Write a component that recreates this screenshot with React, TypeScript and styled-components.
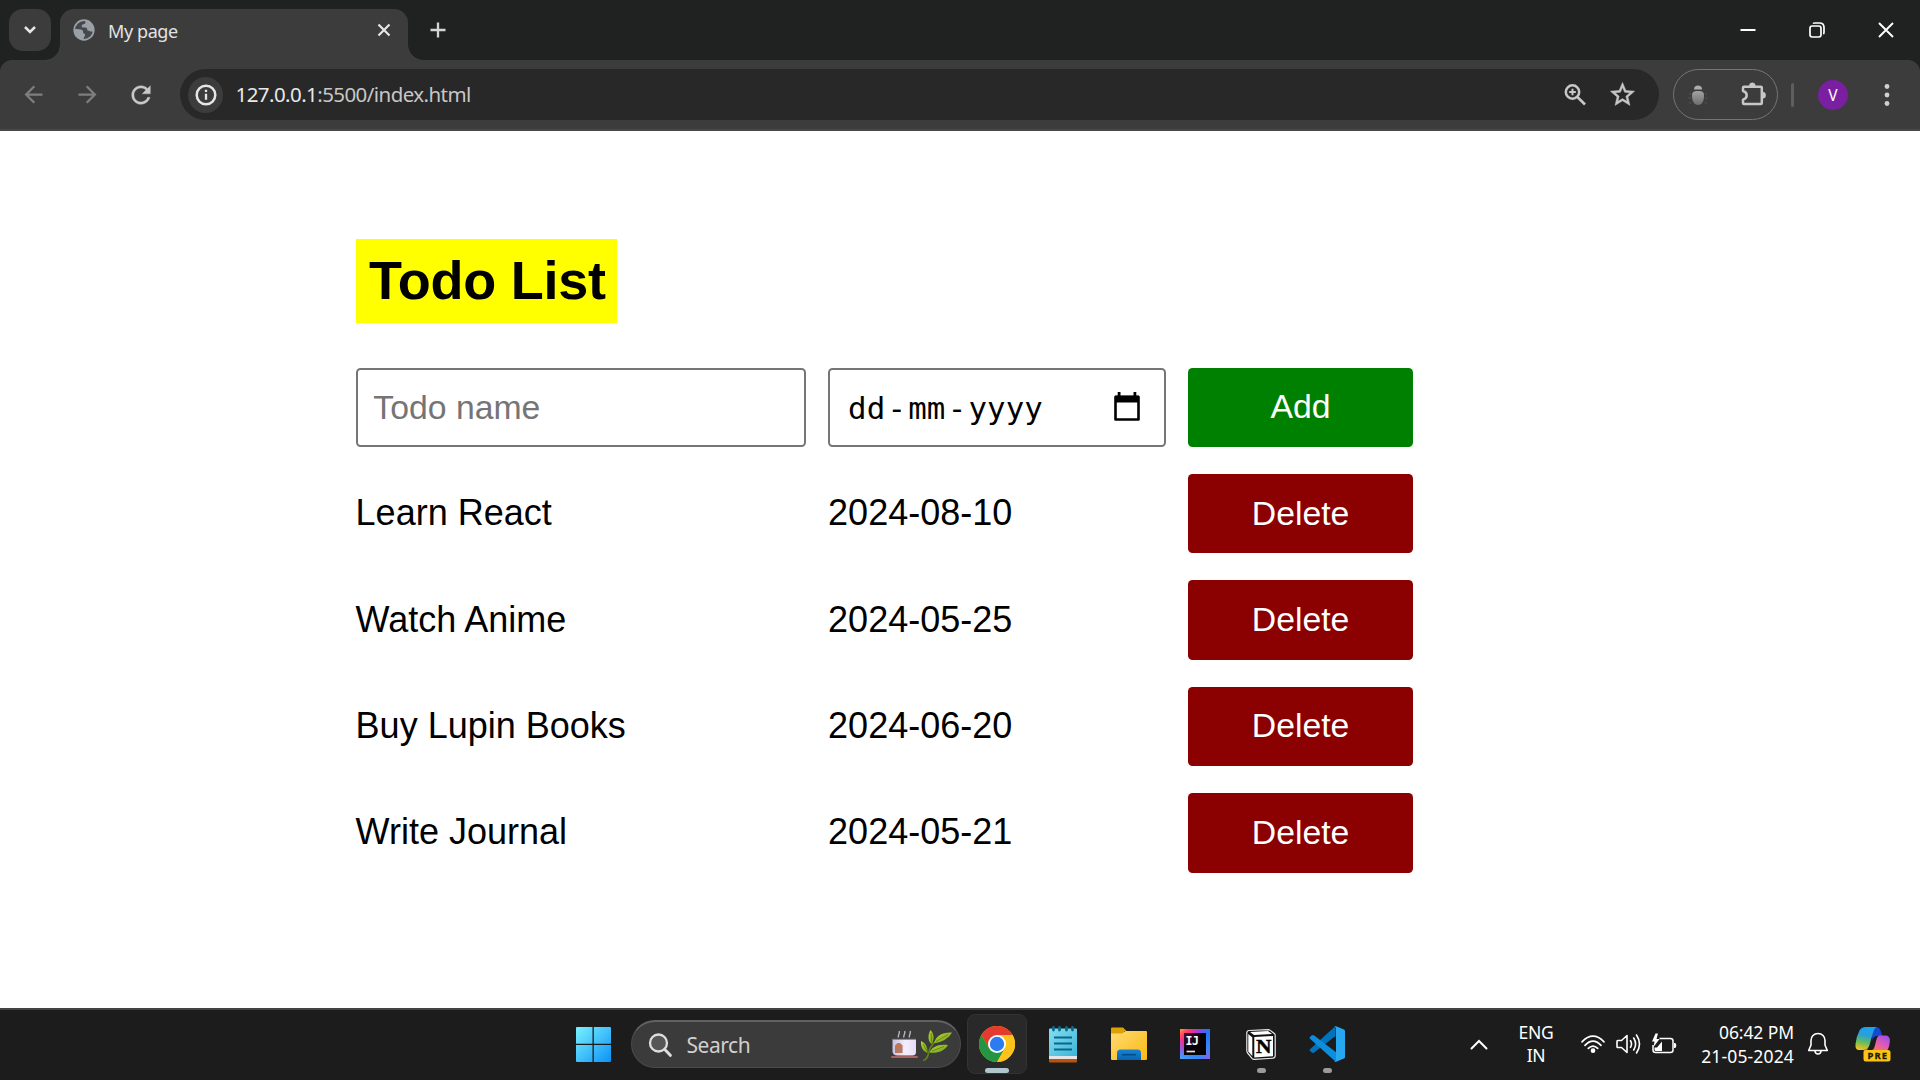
import React from "react";
import styled, { createGlobalStyle } from "styled-components";

const GlobalStyle = createGlobalStyle`
  *, *::before, *::after { box-sizing: border-box; }
  html, body { margin: 0; padding: 0; }
  body { background: #fff; overflow: hidden; }
  svg { display: block; flex: none; }
`;

const uiFont = `"Noto Sans", "Open Sans", sans-serif`;
const pageFont = `"Liberation Sans", Arial, sans-serif`;

const Screen = styled.div`
  width: 1920px;
  height: 1080px;
  display: flex;
  flex-direction: column;
  overflow: hidden;
  font-family: ${uiFont};
`;

/* ---------- browser chrome ---------- */

const TabStrip = styled.div`
  height: 60px;
  flex: none;
  display: flex;
  background: #202221;
  padding-left: 9px;
`;

const TabSearch = styled.button`
  width: 42px;
  height: 42px;
  margin: 9px 9px 0 0;
  padding: 0;
  border: 0;
  border-radius: 14px;
  background: #3c3c3c;
  display: grid;
  place-items: center;
`;

const Tab = styled.div`
  position: relative;
  width: 348px;
  height: 51px;
  margin-top: 9px;
  padding: 0 16px 9px 13px;
  border-radius: 14px 14px 0 0;
  background: #3c3c3c;
  display: flex;
  align-items: center;
  color: #e3e3e3;

  &::before,
  &::after {
    content: "";
    position: absolute;
    bottom: 0;
    width: 15px;
    height: 15px;
  }
  &::before {
    left: -15px;
    background: radial-gradient(circle at 0 0, transparent 14.5px, #3c3c3c 15px);
  }
  &::after {
    right: -15px;
    background: radial-gradient(circle at 100% 0, transparent 14.5px, #3c3c3c 15px);
  }
`;

const TabTitle = styled.span`
  flex: 1;
  padding: 2px 0 0 13px;
  font-size: 18px;
  line-height: 24px;
  letter-spacing: -0.4px;
`;

const NewTab = styled.div`
  margin: 21px 0 0 22px;
`;

const WindowButtons = styled.div`
  margin-left: auto;
  height: 60px;
  display: flex;
`;

const WindowButton = styled.div`
  width: 69px;
  height: 60px;
  padding-bottom: 1px;
  display: grid;
  place-items: center;
`;

const ToolbarBack = styled.div`
  flex: none;
  background: #202221;
`;

const Toolbar = styled.div`
  height: 71px;
  border-radius: 12px 12px 0 0;
  border-bottom: 2px solid #484848;
  background: #3c3c3c;
  display: flex;
  align-items: center;
  padding: 0 0 0 6px;
`;

const NavButton = styled.div`
  width: 54px;
  height: 54px;
  display: grid;
  place-items: center;
`;

const Omnibox = styled.div`
  width: 1479px;
  height: 51px;
  margin-left: 12px;
  border-radius: 26px;
  background: #282828;
  display: flex;
  align-items: center;
  padding: 0 21px 0 8px;
`;

const SiteInfo = styled.div`
  width: 35px;
  height: 36px;
  border-radius: 50%;
  background: #3c3c3c;
  display: grid;
  place-items: center;
`;

const Url = styled.div`
  flex: 1;
  padding: 0 0 2px 12.5px;
  font-size: 20.5px;
  line-height: 28px;
  letter-spacing: -0.57px;
  color: #c7c7c7;
`;

const Host = styled.span`
  color: #e8e8e8;
`;

const OmniIcon = styled.div`
  width: 30px;
  margin-left: 18px;
`;

const ExtensionPill = styled.div`
  width: 105px;
  height: 51px;
  margin-left: 14px;
  border: 1.5px solid #757575;
  border-radius: 26px;
  display: flex;
  align-items: center;
  justify-content: space-between;
  padding: 0 9px 0 14px;
`;

const PuzzleSlot = styled.div`
  padding-bottom: 2px;
`;

const Divider = styled.div`
  width: 3px;
  height: 24px;
  margin-left: 13px;
  border-radius: 2px;
  background: #5e5e5e;
`;

const Avatar = styled.div`
  width: 30px;
  height: 30px;
  margin-left: 24px;
  border-radius: 50%;
  background: #7b1fa2;
  color: #fff;
  font: 15.5px/30px ${uiFont};
  text-align: center;
`;

const Dots = styled.div`
  margin-left: 36px;
`;

/* ---------- page ---------- */

const Page = styled.main`
  flex: 1;
  background: #fff;
  padding: 108px 0 0 355.6px;
  font-family: ${pageFont};
  color: #000;
`;

const Title = styled.h1`
  width: 261px;
  height: 84px;
  margin: 0 0 44.6px;
  padding: 10px 0 0 13.4px;
  background: #ff0;
  font-size: 54px;
  line-height: 62px;
  font-weight: 700;
  letter-spacing: -0.25px;
  white-space: nowrap;
`;

const TodoGrid = styled.div`
  display: grid;
  grid-template-columns: 450px 337.5px 225px;
  grid-auto-rows: 79.4px;
  gap: 27px 22.5px;
  align-items: stretch;
`;

const NameInput = styled.input`
  width: 100%;
  border: 2px solid #767676;
  border-radius: 4.5px;
  padding: 0 15.75px;
  font: 33.75px ${pageFont};
  outline: 0;

  &::placeholder {
    color: #757575;
    opacity: 1;
  }
`;

const DateInput = styled.div`
  border: 2px solid #767676;
  border-radius: 4.5px;
  padding: 1px 23px 0 18px;
  display: flex;
  align-items: center;
  gap: 2.3px;
  font: 30.8px "DejaVu Sans Mono", monospace;
`;

const CalendarSlot = styled.div`
  margin-left: auto;
`;

const Cell = styled.div`
  display: flex;
  align-items: center;
  padding-bottom: 1px;
  font-size: 36px;
`;

const ActionButton = styled.button<{ $tone: string }>`
  border: 0;
  border-radius: 4.5px;
  background: ${(p) => p.$tone};
  color: #fff;
  font: 33.75px ${pageFont};
  padding: 0 0 1px;
`;

/* ---------- taskbar ---------- */

const Taskbar = styled.div`
  height: 72px;
  flex: none;
  border-top: 2px solid #434343;
  background: #1c1c1c;
  display: flex;
  align-items: center;
  padding: 0 29px 2px 563px;
  color: #fff;
`;

const TaskItem = styled.div<{ $active?: boolean }>`
  position: relative;
  width: 60px;
  height: 60px;
  margin-right: 6px;
  border-radius: 8px;
  border: 1.5px solid ${(p) => (p.$active ? "#333" : "transparent")};
  background: ${(p) => (p.$active ? "#292929" : "transparent")};
  display: grid;
  place-items: center;
`;

const Indicator = styled.span<{ $wide?: boolean }>`
  position: absolute;
  bottom: 0;
  left: calc(50% - ${(p) => (p.$wide ? 12 : 4.5)}px);
  width: ${(p) => (p.$wide ? 24 : 9)}px;
  height: 5px;
  border-radius: 3px;
  background: ${(p) => (p.$wide ? "#b0c6cd" : "#9a9a9a")};
`;

const SearchBox = styled.div`
  width: 330px;
  height: 48px;
  margin: 0 6px 0 2px;
  border: 1.5px solid #4b4b4b;
  border-top: 2px solid #626262;
  border-radius: 24px;
  background: #3b3b3b;
  display: flex;
  align-items: center;
  padding: 0 7px 0 16px;
  font-size: 21px;
  color: #d0d0d0;
`;

const SearchLabel = styled.span`
  flex: 1;
  padding-left: 14.5px;
  letter-spacing: -0.45px;
`;

const Tray = styled.div`
  margin-left: auto;
  display: flex;
  align-items: center;
`;

const TraySlot = styled.div<{ $gap: number }>`
  margin-left: ${(p) => p.$gap}px;
`;

const TrayText = styled.div<{ $align: string; $width: number; $gap: number; $line: number; $track: number }>`
  width: ${(p) => p.$width}px;
  margin-left: ${(p) => p.$gap}px;
  text-align: ${(p) => p.$align};
  font-size: 17.5px;
  line-height: ${(p) => p.$line}px;
  letter-spacing: ${(p) => p.$track}px;
  white-space: nowrap;
`;

const ClockLine = styled.div<{ $track: number }>`
  letter-spacing: ${(p) => p.$track}px;
`;

/* ---------- icons ---------- */

const Globe = () => (
  <svg width="22" height="22" viewBox="0 0 22 22">
    <circle cx="11" cy="11" r="9.800" fill="#45494f" stroke="#9aa0a6" strokeWidth="1.700" />
    <path
      d="M12.400 1.500c-.3 2.400.6 2.600-.9 3.400-1.800.4-3 .9-2.800 2.500.2 1.300 2.400 1 3.700 1.100 1.700.2 1.900 1.500 2 2.900 1.800-.2 2.600 1 4 1.200.9.2 1.700-.1 2.200-.6C21.200 6 17.500 1.500 12.400 1.500z"
      fill="#9aa0a6"
    />
    <path
      d="M1.500 10c2.800.2 6.100-.1 7.700 1.100 1.500 1.100.3 2.400 1.500 3.300 1.100.5 1.500.6 1.400 2-.1 1.300-1.500 1.300-1.300 2.500.1 1-.3 1.500-.8 1.800C4.800 20 1.300 15.300 1.500 10z"
      fill="#9aa0a6"
    />
  </svg>
);

const ExtensionBug = () => (
  <svg width="20" height="22" viewBox="0 0 20 22">
    <defs>
      <linearGradient id="bug" x1="0" y1="0" x2="0" y2="1">
        <stop offset="0" stopColor="#a2a2a2" />
        <stop offset="1" stopColor="#6d6d6d" />
      </linearGradient>
    </defs>
    <path d="M6 5.500C6.200 2.500 7.500 1.500 10 1.500s3.900 1 4.100 4z" fill="#adadad" />
    <path d="M4 11.500c0-3.500 1.600-4.500 6-4.500s6 1 6 4.500c0 5.500-2 9.500-6 9.500s-6-4-6-9.500z" fill="url(#bug)" />
    <path d="M1 10h2m14 0h2M0 14h3m14 0h3M1 19h2.500m13 0H19" stroke="#525252" strokeWidth="1.200" />
  </svg>
);

const Puzzle = () => (
  <svg width="30" height="30" viewBox="0 0 30 30">
    <path
      d="M6 7.700H22.800Q23.800 7.700 23.800 8.700V24Q23.800 25.100 22.800 25.100H6Q5 25.100 5 24V20.600C7.300 20 8.700 18.300 8.700 16.300S7.300 12.600 5 12V8.700Q5 7.700 6 7.700z"
      fill="none"
      stroke="#c7c7c7"
      strokeWidth="2.500"
      strokeLinejoin="round"
    />
    <path d="M11.300 7a3 3.300 0 0 1 6 0zM24.500 13a3.200 3.200 0 0 1 0 6.400z" fill="#c7c7c7" stroke="#c7c7c7" strokeWidth=".4" />
  </svg>
);

const Tea = () => (
  <svg width="28" height="30" viewBox="0 0 28 30">
    <defs>
      <linearGradient id="cup" x1="0" y1="0" x2="1" y2="0">
        <stop offset="0" stopColor="#c9bfe0" />
        <stop offset=".55" stopColor="#f4effc" />
        <stop offset="1" stopColor="#e5dcf4" />
      </linearGradient>
    </defs>
    <path d="M7.500 7.500c-1.200-2 1.600-3.500.7-6.500M13 7.500c-1.200-2 1.600-3.500.7-6.500M18.500 7.500c-1.200-2 1.600-3.500.7-6.500" fill="none" stroke="#b9b9bd" strokeWidth="1.400" />
    <path d="M1.500 9h23.500V22q0 3.500-3.500 3.500H6Q2.500 25.500 1.500 22z" fill="url(#cup)" />
    <path d="M1.500 9.300h23.500" stroke="#7d728f" strokeWidth="1" />
    <path d="M4 15.500l2.500-2.500h2.500l2.500 2.500v7.500H4z" fill="#b9775b" />
    <rect x="0" y="26" width="27" height="2" rx="1" fill="#a96264" />
  </svg>
);

const Leaves = () => (
  <svg width="34" height="34" viewBox="0 0 34 34">
    <defs>
      <linearGradient id="leaf" x1="0" y1="0" x2="1" y2="1">
        <stop offset="0" stopColor="#b9d331" />
        <stop offset="1" stopColor="#6fa018" />
      </linearGradient>
    </defs>
    <path d="M4 32.500c4-.5 5-4.500 6-9S14 15 20 11" fill="none" stroke="#5f8218" strokeWidth="1.600" />
    <g fill="url(#leaf)">
      <path d="M11.500 2c3 3 4.500 8 1.500 14-3.500-1-5-8-1.500-14z" />
      <path d="M2 13c4 1.500 7 6 6.500 12C4 23.500 1.500 19 2 13z" />
      <path d="M15 15c2-7 8-11 18-10.500C30 10 23 14.500 15 15z" />
      <path d="M10.500 24.500c2-5.500 9-9 18.500-7.500-4 6.500-11 8.500-18.500 7.500z" />
    </g>
    <path d="M12 5l.7 9M4 16l4 7M17 13.500L29 6.500M13 23l12-4.500" stroke="#55801a" strokeWidth=".8" />
  </svg>
);

const Windows = () => (
  <svg width="36" height="36" viewBox="0 0 36 36">
    <defs>
      <linearGradient id="win" gradientUnits="userSpaceOnUse" x1="0" y1="0" x2="36" y2="36">
        <stop offset="0" stopColor="#7cf4ff" />
        <stop offset=".5" stopColor="#45c3fb" />
        <stop offset="1" stopColor="#0a92f8" />
      </linearGradient>
    </defs>
    <path d="M2 1H17.500V17.700H1V2Q1 1 2 1zM18.800 1H35Q36 1 36 2V17.700H18.800zM1 19H17.500V36H2Q1 36 1 35zM18.800 19H36V35Q36 36 35 36H18.800z" fill="url(#win)" />
  </svg>
);

const Chrome = () => (
  <svg width="36" height="36" viewBox="0 0 36 36">
    <circle cx="18" cy="18" r="18" fill="#fbbc05" />
    <path d="M2.410 9A18 18 0 0 1 33.590 9L18 9L10.200 22.500z" fill="#e33b2e" />
    <path d="M2.410 9A18 18 0 0 0 18 36L25.800 22.500L10.200 22.500z" fill="#249543" />
    <path d="M18 9H33.590A18 18 0 0 1 18 36L25.800 22.500z" fill="#fcc31a" />
    <circle cx="18" cy="18" r="9" fill="#fff" />
    <circle cx="18" cy="18" r="7.200" fill="#2d7bf0" />
  </svg>
);

const Notepad = () => (
  <svg width="28" height="37" viewBox="0 0 28 37">
    <defs>
      <linearGradient id="note" x1="0" y1="0" x2="1" y2="1">
        <stop offset="0" stopColor="#85dff0" />
        <stop offset="1" stopColor="#3cb4d8" />
      </linearGradient>
    </defs>
    <path d="M0 31h28v4.500q0 1-1 1H1q-1 0-1-1z" fill="#b4540e" />
    <path d="M0 29h28v4H0z" fill="#e6e2e6" />
    <path d="M1 2.500h26q1 0 1 1V30H0V3.500q0-1 1-1z" fill="url(#note)" />
    <path d="M5 11.500h18M5 17.500h18M5 23.500h18" stroke="#09678c" strokeWidth="1.900" />
    <path d="M4.500 1.500v2.500M10.500 1.500v2.500M17.500 1.500v2.500M23.500 1.500v2.500" stroke="#0b6c90" strokeWidth="2.800" strokeLinecap="round" />
  </svg>
);

const Folder = () => (
  <svg width="36" height="34" viewBox="0 0 36 34">
    <defs>
      <linearGradient id="fold" x1="0" y1="0" x2="1" y2="1">
        <stop offset="0" stopColor="#ffdc72" />
        <stop offset="1" stopColor="#fcb712" />
      </linearGradient>
      <linearGradient id="foldBlue" x1="0" y1="0" x2="0" y2="1">
        <stop offset="0" stopColor="#1584d8" />
        <stop offset="1" stopColor="#0b63b0" />
      </linearGradient>
    </defs>
    <path d="M1 .5h11l3.500 3.500h-2v4H0V1.500q0-1 1-1z" fill="#dfa006" />
    <path d="M0 6.500h11.500L14.500 4H35q1 0 1 1v27q0 1-1 1H1q-1 0-1-1z" fill="url(#fold)" />
    <path d="M6 33V26q0-3.500 3.500-3.500h17Q30 22.500 30 26v7z" fill="url(#foldBlue)" />
    <path d="M11 27.700h14" stroke="#084b80" strokeWidth="1.600" />
  </svg>
);

const Intellij = () => (
  <svg width="30" height="30" viewBox="0 0 30 30">
    <defs>
      <linearGradient id="ijFrame" x1="0" y1="0" x2="1" y2="1">
        <stop offset="0" stopColor="#ff9a3c" />
        <stop offset=".16" stopColor="#fb3b6e" />
        <stop offset=".38" stopColor="#d81fd0" />
        <stop offset=".55" stopColor="#2b7cf5" />
        <stop offset=".8" stopColor="#3a86f5" />
        <stop offset="1" stopColor="#9a54f2" />
      </linearGradient>
      <linearGradient id="ijCorner" x1="1" y1="0" x2="0" y2="1">
        <stop offset="0" stopColor="#1a78ff" />
        <stop offset=".35" stopColor="#1a78ff" stopOpacity="0" />
        <stop offset=".65" stopColor="#3ea0f5" stopOpacity="0" />
        <stop offset="1" stopColor="#4ba5fa" />
      </linearGradient>
      <radialGradient id="ijCore" cx="0" cy="0" r=".8">
        <stop offset="0" stopColor="#4a0a35" />
        <stop offset="1" stopColor="#050005" />
      </radialGradient>
    </defs>
    <path d="M0 0h30v30H0z" fill="url(#ijFrame)" />
    <path d="M0 0h30v30H0z" fill="url(#ijCorner)" />
    <path d="M4 4h22v22H4z" fill="url(#ijCore)" />
    <text x="5.500" y="15.500" fill="#fff" fontFamily="DejaVu Sans Mono, monospace" fontWeight="700" fontSize="11.500" textLength="13.500">IJ</text>
    <path d="M6.500 22.500h8.500" stroke="#e8dfe6" strokeWidth="1.700" />
  </svg>
);

const Notion = () => (
  <svg width="30" height="31" viewBox="0 0 30 31">
    <path d="M3 1.500L22 .6q1.300 0 2.300.8l4 3q.9.800.9 2V26.500q0 2.500-2.300 2.700L8.500 30.300q-1.500.1-2.500-1L1.600 24q-.8-1-.8-2.500V4q0-2.300 2.200-2.500z" fill="#111" stroke="#e9e9e9" strokeWidth="1.200" />
    <path d="M4 2.900L22 2l4 3L8 6z" fill="#fff" />
    <path d="M2.300 5l4 3.500v18.500L2.300 22.500z" fill="#fff" />
    <path d="M8.300 8.100l18.700-1.100v20.300l-18.700 1.100z" fill="#fff" />
    <text x="10" y="24" fill="#000" stroke="#000" strokeWidth=".4" fontFamily="Liberation Serif, serif" fontWeight="700" fontSize="19.500" textLength="15.500" lengthAdjust="spacingAndGlyphs">N</text>
  </svg>
);

const VsCode = () => (
  <svg width="36" height="36" viewBox="0 0 36 36">
    <path d="M1 23.200L26.500 0V10L5.200 26.500q-1.400 1.100-2.700-.2L1 25q-1-.9 0-1.800z" fill="#0073bb" />
    <path d="M1 12.800q-1-.9 0-1.800L2.500 9.600q1.300-1.200 2.700-.1L27 26.300V36z" fill="#0d8ddb" />
    <path d="M26.500 0L35 3.500Q36 4 36 5V31Q36 32 35 32.500L26.500 36q-1 0-1.700-.7Q27 36 27 33.500V2.500Q27 0 24.800.8z" fill="#27a7f0" />
  </svg>
);

const Wifi = () => (
  <svg width="26" height="20" viewBox="0 0 26 20" fill="none" stroke="#fff" strokeWidth="1.700" strokeLinecap="round">
    <path d="M2 7.800Q13-3.500 24 7.800M5 11.300Q13 2.900 21 11.300M8.300 14.400Q13 9.700 17.700 14.400" />
    <circle cx="13" cy="16.700" r="1.500" fill="#fff" />
  </svg>
);

const Speaker = () => (
  <svg width="25" height="22" viewBox="0 0 25 22" fill="none" stroke="#fff" strokeWidth="1.600" strokeLinecap="round" strokeLinejoin="round">
    <path d="M1 8.200Q1 7.500 1.700 7.500H5.500L11 2.500V19.500L5.500 14.500H1.700Q1 14.500 1 13.800z" />
    <path d="M14.500 7.700q2 3.300 0 6.600M17.700 5q3.800 6 0 12M20.500 2q6 9 0 18" />
  </svg>
);

const Battery = () => (
  <svg width="26" height="22" viewBox="0 0 26 22">
    <path d="M8.500 5.500H19.500Q22 5.500 22 8V17Q22 19.500 19.500 19.500H4.500Q2 19.500 2 17V12" fill="none" stroke="#fff" strokeWidth="1.500" />
    <path d="M23 10h1q1.300.3 1.300 2.500T24 15h-1z" fill="#fff" />
    <path d="M3.500 14.500H6L11 8.500V18H5q-1.500 0-1.500-1.500z" fill="#fff" />
    <path d="M4.500.5L1 8.500H3.500L2.500 14L8.500 6H5.500L7 .5z" fill="#fff" />
  </svg>
);

const Bell = () => (
  <svg width="22" height="24" viewBox="0 0 22 24" fill="none" stroke="#fff" strokeWidth="1.600" strokeLinejoin="round">
    <path d="M11 1.500C6.800 1.500 4 4.600 4 8.500V13L1.700 18.500H20.300L18 13V8.500C18 4.600 15.200 1.500 11 1.500z" />
    <path d="M8 19Q8.300 22 11 22T14 19" />
  </svg>
);

const Copilot = () => (
  <svg width="36" height="36" viewBox="0 0 36 36">
    <defs>
      <linearGradient id="cpLeft" x1=".5" y1="0" x2=".3" y2="1">
        <stop offset="0" stopColor="#1aa3ef" />
        <stop offset=".35" stopColor="#2a9fd8" />
        <stop offset=".65" stopColor="#62bb62" />
        <stop offset="1" stopColor="#f2c51b" />
      </linearGradient>
      <linearGradient id="cpRight" x1=".8" y1="0" x2=".2" y2="1">
        <stop offset="0" stopColor="#a04df0" />
        <stop offset=".5" stopColor="#e35bb0" />
        <stop offset="1" stopColor="#fb7a5a" />
      </linearGradient>
    </defs>
    <path d="M16 1H21Q24.500 1 25.500 4.500L27.500 10H22Q18.500 10 17.500 14z" fill="#1648d0" />
    <path d="M10.500 1H21.500Q19.300 2 18.200 6L14.500 19Q13 24 8 24H4Q0 24 .5 18Q1.500 10 4.500 4.500Q6.500 1 10.500 1z" fill="url(#cpLeft)" />
    <path d="M25 9.500H31Q35.500 10 34.800 16Q34 23 31 26H16Q18.500 25 19.500 21L21.500 13.500Q22.500 9.500 25 9.500z" fill="url(#cpRight)" />
    <path d="M13.500 21.500L12 24H17Q18.500 24 19.500 21V25H8z" fill="#e45b6d" />
    <rect x="8.500" y="24" width="27" height="11.500" rx="2.500" fill="#fcc515" />
    <text x="12.500" y="33" fill="#221a00" stroke="#221a00" strokeWidth=".3" fontFamily="Noto Sans, sans-serif" fontWeight="700" fontSize="9.500" textLength="19.500" lengthAdjust="spacing">PRE</text>
  </svg>
);

/* ---------- app ---------- */

const todos = [
  { name: "Learn React", due: "2024-08-10" },
  { name: "Watch Anime", due: "2024-05-25" },
  { name: "Buy Lupin Books", due: "2024-06-20" },
  { name: "Write Journal", due: "2024-05-21" },
];

const BrowserChrome = () => (
  <>
    <TabStrip>
      <TabSearch>
        <svg width="14" height="10" viewBox="0 0 14 10">
          <path d="M2 2l5 5 5-5" fill="none" stroke="#e6e6e6" strokeWidth="2.500" />
        </svg>
      </TabSearch>
      <Tab>
        <Globe />
        <TabTitle>My page</TabTitle>
        <svg width="16" height="16" viewBox="0 0 16 16">
          <path d="M2.500 2.500l11 11m0-11l-11 11" stroke="#e6e6e6" strokeWidth="2.200" />
        </svg>
      </Tab>
      <NewTab>
        <svg width="16" height="18" viewBox="0 0 16 18">
          <path d="M8 1.500v15M.5 9h15" stroke="#d5d5d5" strokeWidth="2.300" />
        </svg>
      </NewTab>
      <WindowButtons>
        <WindowButton>
          <svg width="16" height="16" viewBox="0 0 16 16">
            <path d="M.5 8h15" stroke="#fff" strokeWidth="2" />
          </svg>
        </WindowButton>
        <WindowButton>
          <svg width="16" height="16" viewBox="0 0 16 16" fill="none" stroke="#fff" strokeWidth="1.700">
            <rect x="1" y="4" width="11" height="11" rx="2.200" />
            <path d="M4 1.500Q4.500 1 6 1H10.500Q15 1 15 5.500V10Q15 11.500 14.300 12" />
          </svg>
        </WindowButton>
        <WindowButton>
          <svg width="16" height="16" viewBox="0 0 16 16">
            <path d="M1 1l14 14m0-14L1 15" stroke="#fff" strokeWidth="1.900" />
          </svg>
        </WindowButton>
      </WindowButtons>
    </TabStrip>
    <ToolbarBack>
      <Toolbar>
        <NavButton>
          <svg width="27" height="27" viewBox="0 0 24 24" fill="#7e7e7e">
            <path d="M20 11H7.830l5.590-5.590L12 4l-8 8 8 8 1.410-1.410L7.830 13H20v-2z" />
          </svg>
        </NavButton>
        <NavButton>
          <svg width="27" height="27" viewBox="0 0 24 24" fill="#7e7e7e">
            <path d="M12 4l-1.410 1.410L16.170 11H4v2h12.170l-5.580 5.590L12 20l8-8z" />
          </svg>
        </NavButton>
        <NavButton>
          <svg width="28" height="28" viewBox="0 0 24 24" fill="#c9c9c9" stroke="#c9c9c9" strokeWidth=".3">
            <path d="M17.650 6.350C16.200 4.900 14.210 4 12 4c-4.420 0-7.990 3.580-7.990 8s3.570 8 7.990 8c3.730 0 6.840-2.550 7.730-6h-2.080c-.820 2.330-3.040 4-5.650 4-3.310 0-6-2.690-6-6s2.690-6 6-6c1.660 0 3.140.690 4.220 1.780L13 11h7V4l-2.350 2.350z" />
          </svg>
        </NavButton>
        <Omnibox>
          <SiteInfo>
            <svg width="22" height="22" viewBox="0 0 22 22">
              <circle cx="11" cy="11" r="9.300" fill="none" stroke="#e6e6e6" strokeWidth="2.500" />
              <path d="M11 9.800v6M11 5.700v2.300" stroke="#e6e6e6" strokeWidth="2.300" />
            </svg>
          </SiteInfo>
          <Url>
            <Host>127.0.0.1</Host>:5500/index.html
          </Url>
          <OmniIcon>
            <svg width="30" height="30" viewBox="0 0 30 30" fill="none" stroke="#c7c7c7">
              <circle cx="12.500" cy="12" r="6.700" strokeWidth="2.500" />
              <path d="M17.300 16.900l7.700 7.600" strokeWidth="2.700" />
              <path d="M12.500 8.700v6.600M9.200 12h6.600" strokeWidth="2" />
            </svg>
          </OmniIcon>
          <OmniIcon>
            <svg width="29" height="29" viewBox="0 0 24 24" fill="#c7c7c7" stroke="#c7c7c7" strokeWidth=".4">
              <path d="M22 9.240l-7.190-.620L12 2 9.190 8.630 2 9.240l5.460 4.730L5.820 21 12 17.270 18.180 21l-1.630-7.030L22 9.240zM12 15.400l-3.760 2.270 1-4.280-3.320-2.880 4.380-.380L12 6.100l1.710 4.040 4.380.380-3.320 2.880 1 4.280L12 15.400z" />
            </svg>
          </OmniIcon>
        </Omnibox>
        <ExtensionPill>
          <ExtensionBug />
          <PuzzleSlot>
            <Puzzle />
          </PuzzleSlot>
        </ExtensionPill>
        <Divider />
        <Avatar>V</Avatar>
        <Dots>
          <svg width="6" height="24" viewBox="0 0 6 24" fill="#d0d0d0">
            <circle cx="3" cy="3.500" r="2.400" />
            <circle cx="3" cy="12" r="2.400" />
            <circle cx="3" cy="20.500" r="2.400" />
          </svg>
        </Dots>
      </Toolbar>
    </ToolbarBack>
  </>
);

const TodoPage = () => (
  <Page>
    <Title>Todo List</Title>
    <TodoGrid>
      <NameInput placeholder="Todo name" />
      <DateInput>
        <span>dd</span>
        <span>-</span>
        <span>mm</span>
        <span>-</span>
        <span>yyyy</span>
        <CalendarSlot>
          <svg width="28" height="31" viewBox="0 0 28 31">
            <path d="M2.500 5H25.500V27.500H2.500z" fill="none" stroke="#000" strokeWidth="2.600" strokeLinejoin="round" />
            <path d="M2 3.500h24v7H2zM4.700 0h2.800v5H4.700zM20.500 0h2.800v5h-2.800z" />
          </svg>
        </CalendarSlot>
      </DateInput>
      <ActionButton $tone="#008000">Add</ActionButton>
      {todos.map((t) => (
        <React.Fragment key={t.name}>
          <Cell>{t.name}</Cell>
          <Cell>{t.due}</Cell>
          <ActionButton $tone="#8b0000">Delete</ActionButton>
        </React.Fragment>
      ))}
    </TodoGrid>
  </Page>
);

const SystemTaskbar = () => (
  <Taskbar>
    <TaskItem>
      <Windows />
    </TaskItem>
    <SearchBox>
      <svg width="24" height="24" viewBox="0 0 24 24" fill="none" stroke="#dedede">
        <circle cx="10.500" cy="10" r="8.500" strokeWidth="2.300" fill="#565656" />
        <path d="M16.800 16.500l5.500 5.800" strokeWidth="3" strokeLinecap="round" />
      </svg>
      <SearchLabel>Search</SearchLabel>
      <Tea />
      <Leaves />
    </SearchBox>
    <TaskItem $active>
      <Chrome />
      <Indicator $wide />
    </TaskItem>
    <TaskItem>
      <Notepad />
    </TaskItem>
    <TaskItem>
      <Folder />
    </TaskItem>
    <TaskItem>
      <Intellij />
    </TaskItem>
    <TaskItem>
      <Notion />
      <Indicator />
    </TaskItem>
    <TaskItem>
      <VsCode />
      <Indicator />
    </TaskItem>
    <Tray>
      <svg width="18" height="11" viewBox="0 0 18 11">
        <path d="M1.500 9.500L9 2l7.500 7.500" fill="none" stroke="#fff" strokeWidth="2" strokeLinecap="round" />
      </svg>
      <TrayText $align="center" $width={40} $gap={28} $line={23} $track={-0.3}>
        ENG
        <br />
        IN
      </TrayText>
      <TraySlot $gap={24}>
        <Wifi />
      </TraySlot>
      <TraySlot $gap={10}>
        <Speaker />
      </TraySlot>
      <TraySlot $gap={10}>
        <Battery />
      </TraySlot>
      <TrayText $align="right" $width={100} $gap={17} $line={24} $track={0}>
        <ClockLine $track={-0.1}>06:42 PM</ClockLine>
        <ClockLine $track={0.15}>21-05-2024</ClockLine>
      </TrayText>
      <TraySlot $gap={13}>
        <Bell />
      </TraySlot>
      <TraySlot $gap={26}>
        <Copilot />
      </TraySlot>
    </Tray>
  </Taskbar>
);

export default function App() {
  return (
    <Screen>
      <GlobalStyle />
      <BrowserChrome />
      <TodoPage />
      <SystemTaskbar />
    </Screen>
  );
}
